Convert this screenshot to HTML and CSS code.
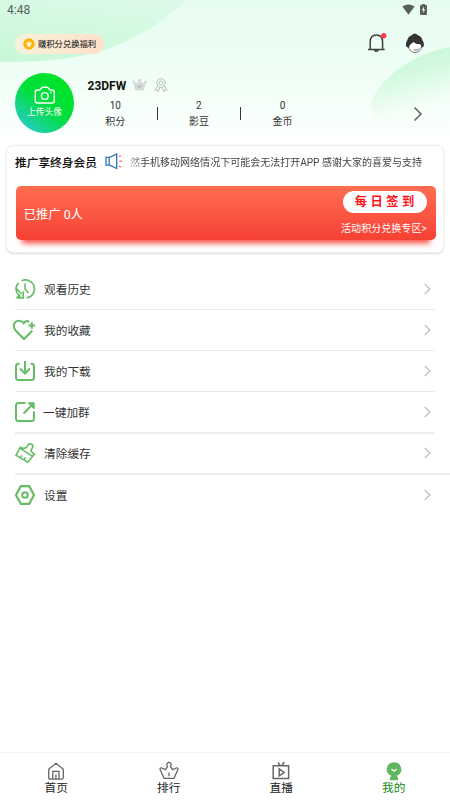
FILE: index.html
```html
<!DOCTYPE html>
<html lang="zh-CN">
<head>
<meta charset="utf-8">
<title>我的</title>
<link rel="stylesheet" href="styles.css">
</head>
<body>
<div class="app">
  <header class="header">
    <svg class="header-bg" viewBox="0 0 450 134" preserveAspectRatio="none">
      <defs>
        <linearGradient id="base" x1="0" y1="0" x2="0" y2="1"><stop offset="0" stop-color="#e7fcf0"/><stop offset=".6" stop-color="#f0fff6"/><stop offset="1" stop-color="#fcfffd"/></linearGradient>
        <linearGradient id="left" x1=".7" y1="0" x2=".3" y2="1"><stop offset="0" stop-color="#dcfae7"/><stop offset="1" stop-color="#c9f8d8"/></linearGradient>
        <linearGradient id="right" gradientUnits="userSpaceOnUse" x1="405" y1="52" x2="423" y2="118"><stop offset="0" stop-color="#c9f7d7"/><stop offset=".3" stop-color="#d3f9df"/><stop offset=".75" stop-color="#effef4"/><stop offset="1" stop-color="#fafffc" stop-opacity="0"/></linearGradient>
      </defs>
      <rect width="450" height="134" fill="url(#base)"/>
      <path d="M0 0H186C163 22 136 40 101 51C69 60 38 62 0 62Z" fill="url(#left)"/>
      <path d="M450 47C419 53 383 72 371 103L375 134H450Z" fill="url(#right)"/>
    </svg>
    <div class="status">
      <span>4:48</span>
      <div class="status-icons">
        <svg width="13" height="11" viewBox="0 0 13 11"><path d="M.4 2.500Q6.500-1.700 12.600 2.500L6.500 10.700Z" fill="#59605b"/></svg>
        <svg width="7" height="11" viewBox="0 0 7 11"><path d="M2 0h3v1h1q1 0 1 1v8q0 1-1 1H1q-1 0-1-1V2q0-1 1-1h1Z" fill="#59605b"/><path d="M4 2.600 1.800 6.200h1.400V9l2-3.600H4Z" fill="#e7fcf0"/></svg>
      </div>
    </div>
    <div class="toolbar">
      <div class="pill">
        <svg width="12" height="12" viewBox="0 0 12 12"><circle cx="6" cy="6" r="5.800" fill="#fdb50b"/><path d="m6 2.800 1 1.800 2.100.5-1.400 1.600.2 2.100h-3.800l.2-2.100-1.400-1.600L5 4.600Z" fill="#fff4d6"/></svg>
        <span>赚积分兑换福利</span>
      </div>
      <div class="tools">
        <svg width="20" height="20" viewBox="0 0 20 20" fill="none"><path d="M3.200 16.300V9C3.200 4.500 5.400 2 9.400 2S15.600 4.500 15.600 9V16.300M1 16.500H17.700M7.500 17.300Q9.400 19.400 11.300 17.300" stroke="#3b403d" stroke-width="1.500"/><circle cx="16.800" cy="2.800" r="2.700" fill="#ff3b4b"/></svg>
        <svg width="20" height="22" viewBox="0 0 20 22"><circle cx="10" cy="14" r="6.500" fill="#fff" stroke="#555" stroke-width=".8"/><path d="M1.200 14.500C.6 12 1.200 10 2.200 8.500 2.700 5.500 4.700 3.800 6.700 3.200Q9.700-.4 12.900 3.200C15.300 3.800 17.100 5.800 17.500 8.500 18.800 10 19.200 12.500 18.600 14.500L16.600 16C16.700 13.500 15.800 12.300 14.200 12.100 11.600 12.200 9.800 11.400 8.600 9.800 7.300 11.600 4.600 12.200 3.600 16Z" fill="#333"/><path d="M9 18h3.500l1.500-1.500" stroke="#444" stroke-width=".8" fill="none"/></svg>
      </div>
    </div>
    <section class="profile">
      <div class="avatar">
        <svg width="22" height="19" viewBox="0 0 22 19" fill="none" stroke="#fff" stroke-width="1.400"><path d="M3.500 4H5.500Q6.500 4 7 2.800T8.700 1.300H13Q14.200 1.300 14.800 2.600T16.700 4H18Q20.300 4 20.300 6.300V14.700Q20.300 17 18 17H3.500Q1.300 17 1.300 14.700V6.300Q1.300 4 3.500 4Z"/><circle cx="10.800" cy="10" r="3.400"/><path d="M16 6.500h1.500"/></svg>
        <span>上传头像</span>
      </div>
      <div class="account">
        <div class="name-line">
          <b>23DFW</b>
          <svg width="15" height="14" viewBox="0 0 16 14"><path d="m1.500 3.500 3.700 2L7 2.200h2l1.800 3.300 3.700-2-1.700 9.200H3.200Z" fill="#d4d8d6"/><circle cx="8" cy="2" r="1.700" fill="#d4d8d6"/><circle cx="1.700" cy="3.800" r="1.500" fill="#d4d8d6"/><circle cx="14.300" cy="3.800" r="1.500" fill="#d4d8d6"/><path d="m6.200 7.500 1.800 2.500 1.800-2.500" stroke="#a5aaa7" fill="none"/></svg>
          <svg width="14" height="14" viewBox="0 0 14 14" fill="none" stroke="#b9bebb" stroke-width="1"><circle cx="7" cy="5" r="4.300"/><circle cx="7" cy="5" r="2"/><path d="m3.800 8-3 4 2.300-.2.800 1.700L6 9.600m4.200-1.600 3 4-2.300-.2-.8 1.700L8 9.600"/></svg>
        </div>
        <div class="stats">
          <div class="stat"><span>10</span><span>积分</span></div>
          <i class="bar"></i>
          <div class="stat"><span>2</span><span>影豆</span></div>
          <i class="bar"></i>
          <div class="stat"><span>0</span><span>金币</span></div>
        </div>
      </div>
      <svg class="profile-arrow" width="10" height="16" viewBox="0 0 10 16"><path d="m1.500 1.500 6.500 6.500-6.500 6.500" fill="none" stroke="#666b68" stroke-width="1.700"/></svg>
    </section>
  </header>

  <section class="card">
    <div class="notice">
      <h2>推广享终身会员</h2>
      <svg width="18" height="17" viewBox="0 0 18 17" fill="none"><path d="M1 4.300H4.700L11.700 1V15.500L4.700 12.200H1ZM4.200 4.300V12.200" stroke="#2d73b8" stroke-width="1.300"/><path d="m14 3.700 1.800-1.200M14.400 8.200H17M14 13l1.800 1.200" stroke="#f26365" stroke-width="1.200"/></svg>
      <p>然手机移动网络情况下可能会无法打开APP 感谢大家的喜爱与支持</p>
    </div>
    <div class="banner">
      <span class="promoted">已推广 0人</span>
      <div class="banner-side">
        <span class="checkin">每日签到</span>
        <span class="exchange">活动积分兑换专区&gt;</span>
      </div>
    </div>
  </section>

  <nav class="menu">
    <a class="row">
      <svg class="icon history" viewBox="0 0 20 20"><path d="M6.500 1.900A9 9 0 1 1 11.500 18.900M3.700 3.800Q.8 6.500 1 10.300 1.200 13 3.200 15.500L5.500 18M10 4.500V10L13.500 14M1 9 6.500 15M1.500 18.900H8.200V12.300M2 18.500 4.500 15.500"/></svg>
      <span>观看历史</span><svg class="chevron" viewBox="0 0 7 12"><path d="m.8.900 5 5.100-5 5.100"/></svg>
    </a>
    <a class="row">
      <svg class="icon heart" viewBox="0 0 22 20"><path d="M16.200 1.900Q13-.2 10.800 3.300 8-.2 4.500.9C.5 2.200-.3 6.800 2.200 10L11 19 19.300 10.800M15.500 5.500H22M18.800 2.200V8.800"/></svg>
      <span>我的收藏</span><svg class="chevron" viewBox="0 0 7 12"><path d="m.8.900 5 5.100-5 5.100"/></svg>
    </a>
    <a class="row">
      <svg class="icon" viewBox="0 0 20 20"><path d="M4.500 2.700H3.500Q1 2.700 1 5.200V16.500Q1 19 3.500 19H16.500Q19 19 19 16.500V5.200Q19 2.700 16.500 2.700H15.500M10 0V12.500M5 7.500 10 12.500 15 7.500"/></svg>
      <span>我的下载</span><svg class="chevron" viewBox="0 0 7 12"><path d="m.8.900 5 5.100-5 5.100"/></svg>
    </a>
    <a class="row row-group">
      <svg class="icon" viewBox="0 0 20 20"><path d="M10.500 1H3.500Q1 1 1 3.500V16.500Q1 19 3.500 19H16.500Q19 19 19 16.500V9.500M8.500 11.500 17 3"/><path d="M13 .8H19.200V7Z" fill="#67bd66" stroke-width="1"/></svg>
      <span>一键加群</span><svg class="chevron" viewBox="0 0 7 12"><path d="m.8.900 5 5.100-5 5.100"/></svg>
    </a>
    <a class="row row-clean">
      <svg class="icon brush" viewBox="0 0 20 20"><path d="M5.200 4.300Q8.500 6.300 11.500 4.500L13.300 1.600Q14.500.2 16.600 1.300 18.600 2.500 17.500 4.700L16 7.300Q16 9 19.300 11.300L12.700 19.200 1 12.300ZM4.800 5.200 17.200 13.200M5.500 14.500 6.800 12.300M9.200 16.800 10.500 14.500"/></svg>
      <span>清除缓存</span><svg class="chevron" viewBox="0 0 7 12"><path d="m.8.900 5 5.100-5 5.100"/></svg>
    </a>
    <a class="row row-settings">
      <svg class="icon" viewBox="0 0 20 20"><path d="M5.800 1.200H14.200L19 10 14.200 18.800H5.800L1 10Z" stroke-width="2.200"/><circle cx="10" cy="10" r="2.800"/></svg>
      <span>设置</span><svg class="chevron" viewBox="0 0 7 12"><path d="m.8.900 5 5.100-5 5.100"/></svg>
    </a>
  </nav>

  <nav class="tabs">
    <a class="tab"><svg viewBox="0 0 20 20"><path d="M2.700 8.200 10 2.300 17.300 8.200V16.500Q17.300 18.200 15.600 18.200H4.400Q2.700 18.200 2.700 16.500ZM6.800 18.200V10.400H13V18.200M9.900 13.500V18"/></svg><span>首页</span></a>
    <a class="tab"><svg viewBox="0 0 20 20"><path d="M5 17.300H15L19 8.200Q18.600 6.500 17.300 7L13.500 8.700 11.500 5.500Q12.700 3.900 11.800 2.400 10 .2 8.200 2.400 7.300 3.900 8.500 5.500L6.500 8.700 2.700 7Q1.400 6.500 1 8.200ZM10 11.500V15.300"/></svg><span>排行</span></a>
    <a class="tab"><svg viewBox="0 0 20 20"><path d="M2.200 4.800H17.600V17.500H2.200ZM8.200 8V14.800L13.200 11.400ZM7 1.500 9 4.500M13.200 1 11 4.500" stroke-width="1.500"/></svg><span>直播</span></a>
    <a class="tab active"><svg viewBox="0 0 20 20"><path d="M10 1.200a7.200 7.200 0 0 0-4 13.200h1.500L5.800 17v2.200h8.400V17L12.500 14.400H14A7.200 7.200 0 0 0 10 1.200Z" fill="#60b75f" stroke="none"/><path d="M7.500 8.200Q10 11.700 12.500 8.200" stroke="#fff"/></svg><span>我的</span></a>
  </nav>
</div>
</body>
</html>
```
FILE: styles.css
```css
* { box-sizing: border-box; }
body { margin: 0; background: #fff; color: #333; font-family: Roboto, "Noto Sans CJK SC", sans-serif; }
svg { display: block; flex: none; }
.app { width: 450px; height: 800px; display: flex; flex-direction: column; overflow: hidden; }

.header { position: relative; height: 134px; flex: none; }
.header-bg { position: absolute; inset: 0; width: 100%; height: 100%; z-index: -1; }
.status { display: flex; height: 20px; justify-content: space-between; padding: 3px 23px 0 7px; font-size: 12px; line-height: 15px; color: #59605b; }
.status-icons { display: flex; gap: 5px; padding-top: .5px; }
.toolbar { display: flex; justify-content: space-between; padding: 13px 25px 0 15px; height: 53px; }
.pill { display: flex; align-items: center; gap: 3px; width: 89px; height: 20px; margin-top: 1px; padding-left: 8px; border-radius: 10px; background: linear-gradient(90deg, #f8f1dc, #ffe1c9); font-size: 8.3px; line-height: 20px; white-space: nowrap; color: #222; -webkit-text-stroke: .1px #222; }
.tools { display: flex; gap: 18px; }
.tools svg:last-child { margin-top: -1px; }

.profile { display: flex; height: 60px; padding: 0 27px 0 15px; }
.avatar { display: flex; flex-direction: column; align-items: center; width: 59px; height: 60px; padding-top: 13px; border-radius: 50%; background: linear-gradient(38deg, #2bc9dd 4%, #00df3c 50%, #00e51f); color: #fff; font-size: 8.8px; line-height: 13px; }
.avatar span { margin-top: 1px; }
.account { flex: 1; }
.name-line { display: flex; align-items: center; gap: 6px; height: 26px; padding-left: 13.5px; font-size: 11.8px; color: #111; }
.name-line svg { margin-top: -2px; }
.name-line svg:last-child { margin-left: 1px; }
.name-line b { font-size: 12px; }
.stats { display: flex; align-items: center; height: 30px; }
.stat { display: flex; flex-direction: column; align-items: center; width: 82.6px; font-size: 10px; line-height: 15px; }
.stat span:first-child { line-height: 13px; margin-top: -1px; margin-bottom: 2px; }
.bar { width: 1px; height: 13px; background: #333; margin-top: -1px; }
.profile-arrow { margin-top: 33px; }

.card { flex: none; width: 438px; height: 108px; margin: 11px 0 0 6px; padding: 0 8px; background: #fff; border: 1px solid #efefef; border-radius: 7px; box-shadow: 0 1px 2px #0002; }
.notice { display: flex; align-items: center; height: 33px; margin-top: -1px; white-space: nowrap; }
.notice h2 { width: 90px; margin: 0; font-size: 11.7px; font-weight: 500; color: #111; -webkit-text-stroke: .1px #111; }
.notice p { margin: 0 0 0 7px; font-size: 10.03px; color: #444; mask-image: linear-gradient(90deg, #0005, #000 14px); }
.banner { display: flex; justify-content: space-between; width: 420px; height: 54px; margin: 8px 0 0 .7px; padding: 5px 9px 0 8px; background: linear-gradient(#ff6e51, #f64135); border-radius: 5px; box-shadow: 0 9px 6px -6px #f64135; color: #fff; }
.promoted { font-size: 12.3px; line-height: 48px; }
.banner-side { display: flex; flex-direction: column; align-items: flex-end; }
.checkin { width: 84px; height: 22px; padding-left: 12px; border-radius: 11px; background: #fff; color: #ff101a; font-size: 12.3px; font-weight: 700; line-height: 22px; letter-spacing: 3.5px; white-space: nowrap; }
.exchange { margin-top: 7px; font-size: 10.05px; line-height: 17px; white-space: nowrap; }

.menu { padding: 16px 0 0 15px; }
.row { display: flex; align-items: center; width: 420px; height: 41px; padding-right: 4px; border-bottom: 1px solid #e9e9e9; font-size: 11.7px; line-height: 18px; }
.row span { flex: 1; margin: 1px 0 0 9px; }
.icon { width: 20px; height: 20px; fill: none; stroke: #67bd66; stroke-width: 2; overflow: visible; }
.history, .brush { stroke-width: 1.6; }
.heart { width: 22px; margin-left: -2px; }
.chevron { width: 7px; height: 12px; fill: none; stroke: #bdbdbd; stroke-width: 1.3; }
.row-group { height: 42px; border-bottom-width: 2px; border-color: #eee; }
.row-group span { margin-left: 8px; }
.row-clean { width: 435px; padding: 0 19px 1px 0; border-bottom-width: 2px; border-color: #eee; }
.row-settings { height: 40px; border: 0; }

.tabs { display: flex; height: 48px; margin-top: auto; border-top: 1px solid #f3f3f3; }
.tab { flex: 1; display: flex; flex-direction: column; align-items: center; padding-top: 8px; color: #222; font-size: 11.7px; line-height: 16px; }
.tab svg { width: 20px; height: 20px; fill: none; stroke: #666; stroke-width: 1.3; }
.tab span { margin-top: -1px; }
.tab.active { color: #128c12; }
```
